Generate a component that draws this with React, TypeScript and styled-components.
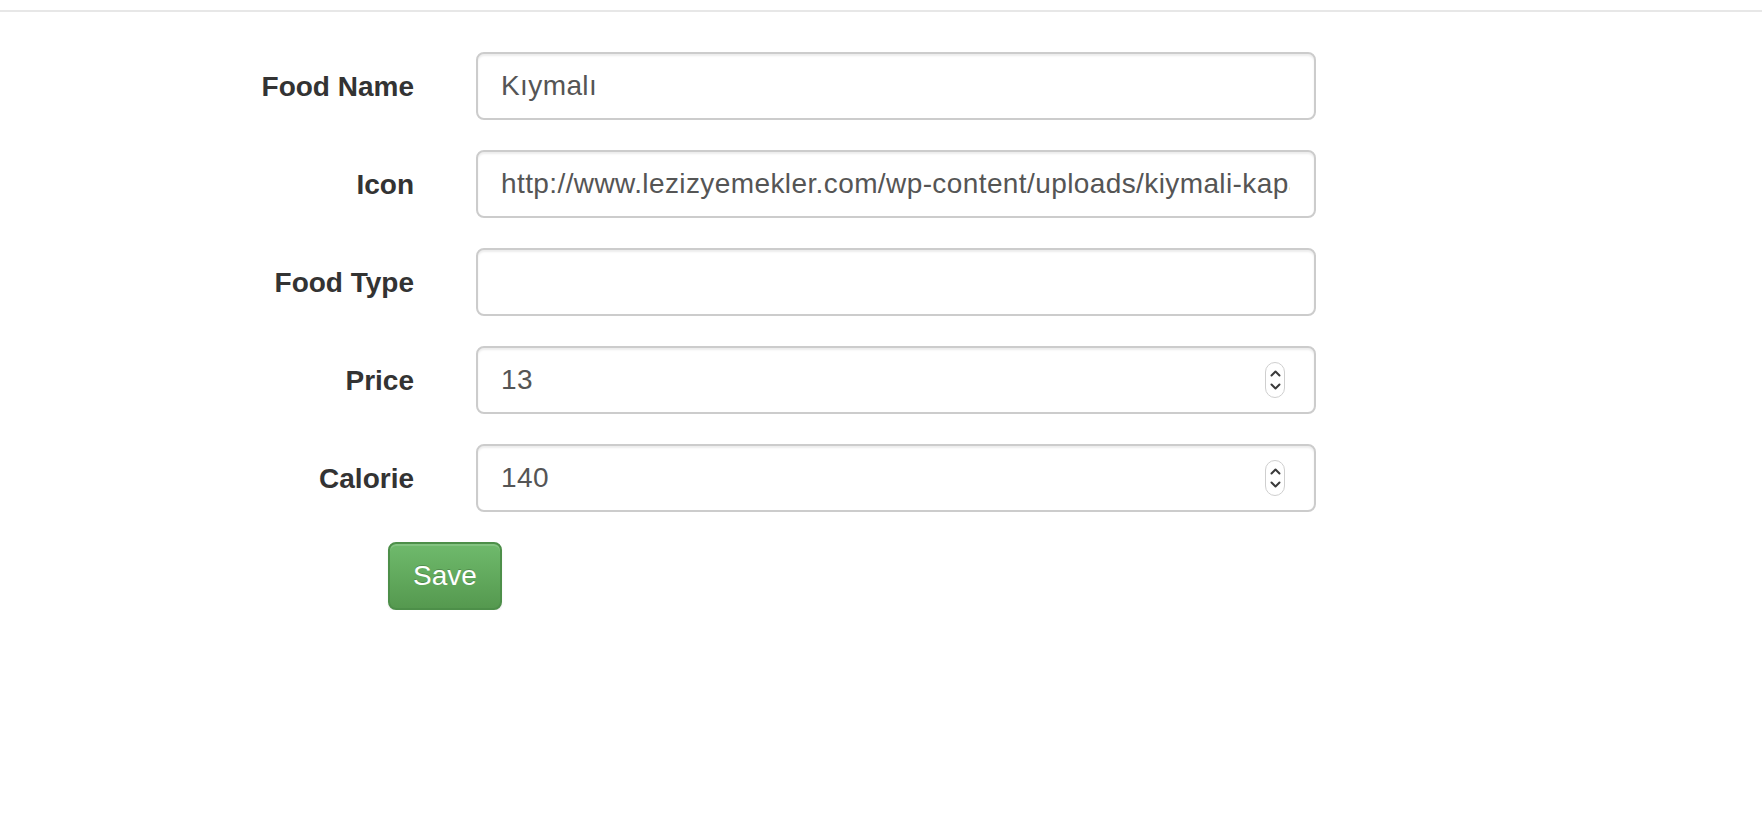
import React from 'react';
import styled, { createGlobalStyle } from 'styled-components';

const GlobalStyle = createGlobalStyle`
  html, body {
    margin: 0;
    padding: 0;
    background: #fff;
    font-family: 'Liberation Sans', Arial, sans-serif;
    color: #333;
  }

  input[type='number']::-webkit-outer-spin-button,
  input[type='number']::-webkit-inner-spin-button {
    -webkit-appearance: none;
    margin: 0;
  }

  input[type='number'] {
    -moz-appearance: textfield;
  }
`;

const TopBar = styled.div`
  height: 10px;
  border-bottom: 2px solid #e7e7e7;
`;

const Form = styled.form`
  padding-top: 40px;
`;

const FormGroup = styled.div`
  display: grid;
  grid-template-columns: 414px 840px;
  column-gap: 62px;
  margin-bottom: 30px;
`;

const Label = styled.label`
  text-align: right;
  font-size: 28px;
  font-weight: bold;
  line-height: 40px;
  padding-top: 15px;
  color: #333;
`;

const Field = styled.div`
  position: relative;
`;

const Input = styled.input`
  box-sizing: border-box;
  display: block;
  width: 100%;
  height: 68px;
  padding: 12px 24px 12px 23px;
  font-family: 'Liberation Sans', Arial, sans-serif;
  font-size: 28px;
  letter-spacing: 0.4px;
  line-height: 40px;
  color: #555;
  background: #fff;
  border: 2px solid #ccc;
  border-radius: 8px;
  box-shadow: inset 0 2px 2px rgba(0, 0, 0, 0.075);
  outline: none;
`;

const Spinner = styled.span`
  position: absolute;
  right: 31px;
  top: 50%;
  transform: translateY(-50%);
  box-sizing: border-box;
  width: 20px;
  height: 36px;
  border: 1px solid #cfcfcf;
  border-radius: 10px;
  background: #fff;
  display: flex;
  flex-direction: column;
  align-items: center;
  justify-content: center;
  gap: 6px;
`;

const ButtonRow = styled.div`
  padding-left: 388px;
`;

const SaveButton = styled.button`
  box-sizing: border-box;
  height: 68px;
  padding: 12px 23px;
  font-family: 'Liberation Sans', Arial, sans-serif;
  font-size: 28px;
  line-height: 40px;
  color: #fff;
  text-shadow: 0 -1px 0 rgba(0, 0, 0, 0.2);
  background-image: linear-gradient(to bottom, #6fba6c 0%, #55994f 100%);
  border: 2px solid #4d8f49;
  border-radius: 8px;
  box-shadow: inset 0 2px 0 rgba(255, 255, 255, 0.15), 0 2px 2px rgba(0, 0, 0, 0.075);
  cursor: pointer;
`;

const Chevron = ({ up }: { up?: boolean }) => (
  <svg width="11" height="7" viewBox="0 0 11 7">
    <path
      d={up ? 'M1.5 5.5 L5.5 1.5 L9.5 5.5' : 'M1.5 1.5 L5.5 5.5 L9.5 1.5'}
      fill="none"
      stroke="#3a3a3a"
      strokeWidth="2"
      strokeLinecap="round"
      strokeLinejoin="round"
    />
  </svg>
);

interface RowProps {
  label: string;
  value?: string;
  number?: boolean;
}

const Row = ({ label, value, number }: RowProps) => (
  <FormGroup>
    <Label>{label}</Label>
    <Field>
      <Input type={number ? 'number' : 'text'} defaultValue={value} />
      {number && (
        <Spinner>
          <Chevron up />
          <Chevron />
        </Spinner>
      )}
    </Field>
  </FormGroup>
);

const App = () => (
  <>
    <GlobalStyle />
    <TopBar />
    <Form onSubmit={(e) => e.preventDefault()}>
      <Row label="Food Name" value="Kıymalı" />
      <Row label="Icon" value="http://www.lezizyemekler.com/wp-content/uploads/kiymali-kapama.jpg" />
      <Row label="Food Type" value="" />
      <Row label="Price" value="13" number />
      <Row label="Calorie" value="140" number />
      <ButtonRow>
        <SaveButton type="submit">Save</SaveButton>
      </ButtonRow>
    </Form>
  </>
);

export default App;
